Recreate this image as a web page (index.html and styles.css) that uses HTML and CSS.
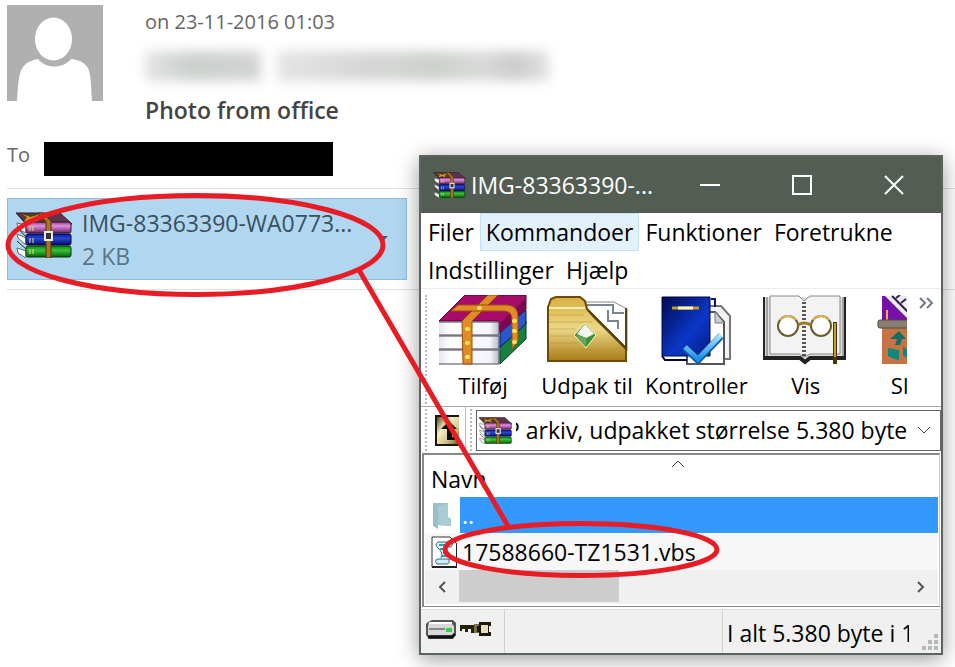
FILE: index.html
```html
<!DOCTYPE html>
<html lang="da">
<head>
<meta charset="utf-8">
<title>Photo from office</title>
<link rel="stylesheet" href="styles.css">
</head>
<body>
<svg class="defs" aria-hidden="true">
  <defs>
    <linearGradient id="pink" x1="0" y1="0" x2="0" y2="1"><stop offset="0" stop-color="#8d3b82"/><stop offset=".35" stop-color="#e08fdc"/><stop offset="1" stop-color="#6b2463"/></linearGradient>
    <linearGradient id="blue" x1="0" y1="0" x2="0" y2="1"><stop offset="0" stop-color="#0a1890"/><stop offset=".4" stop-color="#2748d8"/><stop offset="1" stop-color="#050a60"/></linearGradient>
    <linearGradient id="green" x1="0" y1="0" x2="0" y2="1"><stop offset="0" stop-color="#148a18"/><stop offset=".4" stop-color="#35c235"/><stop offset="1" stop-color="#0a5c0e"/></linearGradient>
    <linearGradient id="page" x1="0" y1="0" x2="1" y2="0"><stop offset="0" stop-color="#e4e8f0"/><stop offset=".2" stop-color="#fff"/><stop offset=".85" stop-color="#f4f5fa"/><stop offset="1" stop-color="#b6bac8"/></linearGradient>
    <linearGradient id="gold" x1="0" y1="0" x2="0" y2="1"><stop offset="0" stop-color="#d8b040"/><stop offset=".5" stop-color="#ecd888"/><stop offset="1" stop-color="#a87a14"/></linearGradient>
    <linearGradient id="cover" x1="0" y1="0" x2="1" y2="1"><stop offset="0" stop-color="#020a50"/><stop offset=".6" stop-color="#0b37c8"/><stop offset="1" stop-color="#041a80"/></linearGradient>
    <linearGradient id="tick" x1="0" y1="0" x2="0" y2="1"><stop offset="0" stop-color="#a8e4ff"/><stop offset="1" stop-color="#1b8fe0"/></linearGradient>
    <linearGradient id="brass" x1="0" y1="0" x2="1" y2="1"><stop offset="0" stop-color="#5a4a18"/><stop offset=".35" stop-color="#f4efc8"/><stop offset=".65" stop-color="#d8c88c"/><stop offset="1" stop-color="#6a5820"/></linearGradient>
    <symbol id="books" viewBox="0 0 56 46">
      <path d="M0 1H44L56 12H11Z" fill="#5c3450" stroke="#2a1a20"/>
      <path d="M3 2H24L34 11H16Z" fill="#5a3d14"/>
      <path d="M6 2l9 3 9-3-5 5 4 4-8-4-7 3 3-5Z" fill="#c79a2a"/>
      <path d="M1 11l9 2v8L2 17ZM1 22l9 4v7l-8-7ZM1 36l9 3v7l-8-5Z" fill="#fff" stroke="#666"/>
      <path d="M0 1l10 11M1 15l9 10M1 29l9 8" fill="none" stroke="#252525"/>
      <rect x="10" y="10" width="45" height="11" rx="2" fill="url(#pink)" stroke="#36152f"/>
      <rect x="10" y="22" width="45" height="11" rx="2" fill="url(#blue)" stroke="#040832"/>
      <rect x="10" y="34" width="45" height="11" rx="2" fill="url(#green)" stroke="#05340a"/>
      <path d="M14 14v5M17 14v5M14 26v5M17 26v5M14 37v5M17 37v5" stroke="#f0df78"/>
      <path d="M27 1l8 8v37h-5V10L22 1Z" fill="#a87424" stroke="#503208"/>
      <rect x="29" y="20" width="7" height="8" fill="#333" stroke="#e6e6e6" stroke-width="2"/>
    </symbol>
  </defs>
</svg>

<main class="mail">
  <header class="mail-head">
    <svg class="avatar" viewBox="0 0 96 96" role="img" aria-label="Sender">
      <rect width="96" height="96" fill="#b0b0b0"/>
      <ellipse cx="46.500" cy="34" rx="18.500" ry="21.500" fill="#fff"/>
      <path d="M10 96C11 78 12 67 16 62C20 57 25 55 31 54C39 64 56 64 64 54C73 55 78 58 81 63C84 69 84 80 85 96Z" fill="#fff"/>
    </svg>
    <div class="mail-meta">
      <p class="date">on 23-11-2016 01:03</p>
      <div class="sender"><i class="blot one"></i><i class="blot two"></i><i class="blot three"></i></div>
      <h1>Photo from office</h1>
    </div>
  </header>
  <div class="to"><span>To</span><div class="redacted"></div></div>
  <section class="attachments">
    <a class="attachment" href="#file">
      <svg class="file-icon"><use href="#books"/></svg>
      <span class="file-text"><span class="file-name">IMG-83363390-WA0773...</span><span class="file-size">2 KB</span></span>
      <span class="drop"></span>
    </a>
  </section>
</main>

<section class="window">
  <header class="titlebar">
    <svg class="title-icon"><use href="#books"/></svg>
    <h2>IMG-83363390-...</h2>
    <div class="win-buttons">
      <button aria-label="Minimer"><svg viewBox="0 0 20 20"><path d="M0 10H20" stroke-width="2"/></svg></button>
      <button aria-label="Maksimer"><svg viewBox="0 0 20 20"><path d="M1 1H19V19H1Z" stroke-width="2"/></svg></button>
      <button aria-label="Luk"><svg viewBox="0 0 20 20"><path d="M1 1L19 19M19 1L1 19" stroke-width="2"/></svg></button>
    </div>
  </header>
  <nav class="menu">
    <button>Filer</button><button class="hot">Kommandoer</button><button>Funktioner</button><button>Foretrukne</button><button>Indstillinger</button><button>Hjælp</button>
  </nav>
  <div class="toolbar">
    <span class="grip"></span>
    <div class="tools">
      <button>
        <svg viewBox="0 0 90 70">
          <path d="M62 50L88 26V44L62 69Z" fill="#168040" stroke="#053818"/>
          <path d="M62 36L88 15V29L62 52Z" fill="#2858d0" stroke="#061a58"/>
          <path d="M1 26L27 0H88V14L62 38L60 26Z" fill="#a80c68" stroke="#500530"/>
          <path d="M62 28L88 3V14L62 38Z" fill="#7c0850"/>
          <path d="M1 27H61V40H1ZM1 41H61V54H1ZM1 55H61V69H1Z" fill="url(#page)"/>
          <path d="M1 27H61V40H1M1 41H61V54H1M1 55H61V69H1" fill="none" stroke="#4a4658"/>
          <path d="M24 26L50 0H60L34 26V69H25Z" fill="#e08a28" stroke="#9a5208"/>
          <path d="M20 10H70Q80 11 80 22V46L74 54V25Q74 16 66 16H13Z" fill="#e08a28" stroke="#9a5208"/>
          <path d="M29 34h1M29 48h1M29 62h1M41 13h1M76 26h1M76 36h1M76 47h1" stroke="#ffe65a" stroke-width="4" stroke-linecap="round"/>
        </svg><span>Tilføj</span></button>
      <button>
        <svg viewBox="0 0 90 70">
          <path d="M41 7H72L85 14V56H41Z" fill="#fff" stroke="#888"/>
          <path d="M44 10H71V18H82M66 15V26H76V34" fill="none" stroke="#7c8494" stroke-width="2"/>
          <path d="M6 12L9 4L14 2H38L43 6L45 14L52 22L84 54V66H6Z" fill="url(#gold)" stroke="#6b4a08" stroke-width="2"/>
          <path d="M46 15L84 53V13" fill="none" stroke="#57420e" stroke-width="2"/>
          <path d="M7 13H43" stroke="#fff0b0" stroke-width="2"/>
          <path d="M8 20H42M8 27H50M8 34H34M8 41H32M8 48H36M8 55H80" stroke="#b98e28" opacity=".5"/>
          <path d="M43 28L54 40L44 53L32 40Z" fill="#3f9138" stroke="#fff5c0"/>
          <path d="M43 29L52 39L44 43L35 39Z" fill="#f3f5ee"/>
          <path d="M44 43V52L33 40Z" fill="#68a858"/>
        </svg><span>Udpak til</span></button>
      <button>
        <svg viewBox="0 0 90 70">
          <path d="M56 11H70L79 21V64H56Z" fill="#f3f3f3" stroke="#777" stroke-width="2"/>
          <path d="M54 17H64L73 27V69H36V54H54Z" fill="#fff" stroke="#555" stroke-width="2"/>
          <path d="M64 17V28H73" fill="#ccc" stroke="#777"/>
          <path d="M11 2H59V61H11Z" fill="url(#cover)" stroke="#020840"/>
          <path d="M60 4H64V12" fill="none" stroke="#051770" stroke-width="2"/>
          <path d="M11 61L14 65H36" fill="none" stroke="#04083a" stroke-width="2"/>
          <path d="M21 13H48" stroke="#bd9c34" stroke-width="3"/><path d="M27 13H42" stroke="#fff2b4" stroke-width="3"/>
          <path d="M34 53L47 65L70 41" fill="none" stroke="#0e5aa8" stroke-width="7"/>
          <path d="M34 52L47 64L70 40" fill="none" stroke="url(#tick)" stroke-width="5"/>
        </svg><span>Kontroller</span></button>
      <button>
        <svg viewBox="0 0 90 70">
          <path d="M3 2V64H39L44 67L49 64H84V2" fill="#ddd" stroke="#222" stroke-width="2"/>
          <path d="M9 1H38L43 6L49 1H79V59H49L43 62L38 59H9Z" fill="#f3f3f3" stroke="#888"/>
          <path d="M6 2V61M82 2V61" stroke="#666"/>
          <path d="M3 63H39L44 67L49 63H84" fill="none" stroke="#222" stroke-width="4"/>
          <path d="M43 7V62" stroke="#555" stroke-width="4" stroke-dasharray="2 2"/>
          <circle cx="27" cy="31" r="10" fill="#fff" stroke="#6b5a30" stroke-width="2"/><circle cx="60" cy="31" r="10" fill="#fff" stroke="#6b5a30" stroke-width="2"/>
          <path d="M19 25Q27 17 35 25M52 25Q60 17 68 25" fill="none" stroke="#d9b65a" stroke-width="2"/>
          <path d="M37 30Q43 26 50 30" fill="none" stroke="#9c7a28" stroke-width="3"/>
          <path d="M74 27V69" stroke="#4a3708" stroke-width="4"/><path d="M74 28V62" stroke="#c89a28" stroke-width="2"/>
        </svg><span>Vis</span></button>
      <button>
        <svg viewBox="0 0 90 70">
          <path d="M17 1H80V26H17Z" fill="#f1edf8"/>
          <path d="M17 1H20L43 24V28H17Z" fill="#7510a8"/>
          <path d="M27 1L46 20M31 3l4-3M36 8l5-4" fill="none" stroke="#33234a" stroke-width="2"/>
          <path d="M22 15V30" stroke="#efad3b" stroke-width="2"/>
          <rect x="17" y="32" width="62" height="37" fill="#c77445"/>
          <rect x="13" y="25" width="68" height="8" rx="2" fill="#887e70" stroke="#504a42"/>
          <path d="M25 44L34 36L41 44H37L35 50H30L32 44Z" fill="#156d66"/>
          <path d="M23 53L34 55V65L29 64L23 61ZM38 52L45 55V66L38 60Z" fill="#13877a"/>
        </svg><span>Slet</span></button>
    </div>
    <button class="more" aria-label="Flere"><svg viewBox="0 0 16 12"><path d="M2 1L7 6L2 11M9 1L14 6L9 11"/></svg></button>
  </div>
  <div class="address">
    <span class="grip"></span>
    <button class="up" aria-label="Op"><svg viewBox="0 0 24 31"><rect width="24" height="31" fill="#18150a"/><rect x="2" y="2" width="22" height="27" fill="url(#brass)"/><path d="M14 6L22 14H17V22H24V25H12V14H6Z" fill="#0d0c08"/></svg></button>
    <span class="rule"></span>
    <span class="grip"></span>
    <div class="combo">
      <svg class="combo-icon"><use href="#books"/></svg>
      <div class="combo-clip"><select aria-label="Arkiv"><option>P arkiv, udpakket størrelse 5.380 byte</option></select></div>
      <svg class="chev" viewBox="0 0 14 8"><path d="M1 1L7 7L13 1"/></svg>
    </div>
  </div>
  <div class="list">
    <table>
      <thead><tr><th colspan="2">Navn<svg class="sort" viewBox="0 0 14 8"><path d="M1 7L7 1L13 7"/></svg></th></tr></thead>
      <tbody>
        <tr class="selected"><td class="ico"><svg viewBox="0 0 26 30"><path d="M2 3H17V17L20 19V26L7 25V29L2 26Z" fill="#9bbfca"/><path d="M7 25V6L17 3V17L20 19V26Z" fill="#a9cbd4"/></svg></td><td class="name">..</td></tr>
        <tr><td class="ico"><svg viewBox="0 0 26 32"><path d="M1 1H19L26 8V31H1Z" fill="#fff" stroke="#333"/><path d="M26 8V31H1" fill="none" stroke="#222" stroke-width="2"/><path d="M7 6H19Q23 8 20 11H16Q14 13 19 18Q22 22 18 24M7 6Q3 9 7 12Q13 17 10 22M6 23H17Q20 27 16 28H6Q3 25 6 23" fill="#d3eef5" stroke="#2c6d86"/><path d="M8 9H18M9 13H15M12 17H17M11 20H18" stroke="#2f9ab8" stroke-width="2"/></svg></td><td class="name">17588660-TZ1531.vbs</td></tr>
      </tbody>
    </table>
    <div class="scroll">
      <button aria-label="Venstre"><svg viewBox="0 0 10 12"><path d="M8 1L3 6L8 11"/></svg></button>
      <div class="track"><div class="thumb"></div></div>
      <button aria-label="Højre"><svg viewBox="0 0 10 12"><path d="M2 1L7 6L2 11"/></svg></button>
    </div>
  </div>
  <footer class="status">
    <div class="status-icons">
      <svg class="drive" viewBox="0 0 32 20"><path d="M3 2L7 0H28L31 3V14L28 19H4L1 15V4Z" fill="#555"/><path d="M4 3H26L29 6V15H3V6Z" fill="#d8d8d8"/><path d="M4 3H27" stroke="#fff" stroke-width="2"/><path d="M3 17H27L30 14" stroke="#111" stroke-width="3" fill="none"/><path d="M4 9H20" stroke="#888" stroke-width="2"/><rect x="21" y="8" width="6" height="4" fill="#38d048"/></svg>
      <svg class="key" viewBox="0 0 34 18"><path d="M1 5H17V9H15V13H12V9H9V12H6V9H3V11H1Z" fill="#29200c"/><rect x="15" y="4" width="6" height="9" fill="#7d6b43"/><path d="M20 2H32V6H30V12H32V16H20V12H18V6H20Z" fill="#1d170a"/><rect x="22" y="5" width="7" height="8" fill="#e9dcb8"/></svg>
    </div>
    <div class="status-mid"></div>
    <div class="status-total"><span>I alt 5.380 byte i 1</span></div>
    <svg class="resize" viewBox="0 0 16 16"><path d="M12 0h4v4h-4zM6 6h4v4h-4zM12 6h4v4h-4zM0 12h4v4h-4zM6 12h4v4h-4zM12 12h4v4h-4z" fill="#b8b8b8"/></svg>
  </footer>
</section>

<svg class="markup" viewBox="0 0 955 667" aria-hidden="true">
  <ellipse cx="195.500" cy="245" rx="187.500" ry="49.500" stroke-width="5"/>
  <path d="M359 270L508 526" stroke-width="5"/>
  <ellipse cx="581" cy="549.500" rx="136" ry="26" stroke-width="5"/>
</svg>
</body>
</html>
```
FILE: styles.css
```css
* { box-sizing: border-box; }
body {
  margin: 0;
  min-height: 100vh;
  background: #fff;
  color: #000;
  font: 23px/30px "Open Sans", "Noto Sans", sans-serif;
  overflow: hidden;
}
h1, h2, p { margin: 0; font-size: inherit; font-weight: 400; }
button, select {
  border: 0;
  padding: 0;
  background: none;
  color: inherit;
  font: inherit;
}
svg { display: block; flex: none; }
.defs { position: absolute; width: 0; height: 0; }

.mail { padding: 5px 0 0 7px; }
.mail-head { display: flex; gap: 42px; }
.avatar { width: 96px; height: 96px; }
.mail-meta { flex: 1; }
.date { font-size: 20px; line-height: 34px; color: #666; }
.sender {
  display: flex;
  align-items: center;
  height: 53px;
  filter: blur(6px);
}
.blot { height: 30px; background: #dcdedc; }
.one { width: 116px; background: linear-gradient(90deg, #e2e4e2, #ccd0cd 40%, #d2d4d2); }
.two { width: 104px; margin-left: 16px; background: linear-gradient(90deg, #e4e4e4, #d2d4d2); }
.three { width: 168px; background: linear-gradient(90deg, #d6d8d6, #cdd0cd 30%, #d8dad8 60%, #ccc 80%, #e2e2e2); }
h1 { line-height: 36px; font-weight: 600; color: #444; }
.to {
  display: flex;
  gap: 16px;
  padding: 8px 0 12px;
  height: 60px;
  color: #666;
  font-size: 20px;
  line-height: 26px;
}
.redacted { width: 289px; height: 34px; margin-top: 6px; background: #000; }
.to span { width: 21px; margin-top: 6px; }
.attachments {
  padding: 9px 0;
  border-top: 1px solid #e0e0e0;
  border-bottom: 1px solid #e0e0e0;
}
.attachment {
  display: flex;
  align-items: flex-start;
  gap: 10px;
  width: 400px;
  height: 82px;
  padding: 9px 8px;
  border: 1px solid #92bcda;
  background: #b1d6f0;
  color: #38505f;
  text-decoration: none;
}
.file-icon { width: 56px; height: 46px; margin-top: 4px; }
.file-text { display: flex; flex-direction: column; gap: 3px; flex: 1; white-space: nowrap; }
.file-size { color: #5c7586; }
.drop { width: 8px; border: 4px solid transparent; border-top-color: #456; margin: 28px 10px 0 0; }

.window {
  position: absolute;
  left: 419px;
  top: 155px;
  width: 524px;
  border: 2px solid #5b645d;
  background: #fff;
  box-shadow: 0 4px 20px rgba(0, 0, 0, .4);
}
.titlebar {
  display: flex;
  align-items: center;
  height: 56px;
  padding: 0 1px 0 12px;
  gap: 5px;
  background: #545d54;
  color: #fff;
}
.title-icon { width: 33px; height: 26px; }
.titlebar h2 { flex: 1; white-space: nowrap; }
.win-buttons { display: flex; }
.win-buttons button { display: grid; place-items: center; width: 92px; height: 54px; }
.win-buttons svg { width: 20px; height: 20px; fill: none; stroke: #fff; }

.menu { display: flex; flex-wrap: wrap; height: 76px; padding-left: 1px; border-bottom: 1px solid #ececec; }
.menu button { height: 38px; padding: 0 5px; border: 1px solid transparent; }
.menu .hot { background: #e3f1fd; border-color: #c5e0f5; }

.toolbar { display: flex; padding: 4px 0 0 4px; height: 118px; border-bottom: 1px solid #aaa; }
.grip { width: 2px; margin: 2px 4px 2px 0; border-left: 2px dotted #bbb; }
.tools { display: flex; flex: 1; overflow: hidden; font-size: 22px; }
.tools button { display: flex; flex: none; flex-direction: column; align-items: center; min-width: 104px; padding: 0 6px; }
.tools svg { width: 90px; height: 70px; margin: 2px -6px 5px; }
.more { display: flex; width: 34px; padding: 4px 0 0 11px; }
.more svg { width: 16px; height: 12px; fill: none; stroke: #747a88; stroke-width: 2; }

.address { display: flex; align-items: center; gap: 4px; height: 46px; padding-left: 4px; }
.address .grip { align-self: stretch; }
.up { margin-right: 2px; }
.up svg { width: 24px; height: 31px; }
.rule { width: 1px; align-self: stretch; background: #bbb; }
.address .rule + .grip { margin-right: 0; }
.combo {
  display: flex;
  align-items: center;
  flex: 1;
  height: 41px;
  padding: 0 9px 0 2px;
  border: 1px solid #666;
  min-width: 0;
}
.combo-icon { width: 33px; height: 27px; margin-right: 4px; }
.combo-clip { flex: 1; overflow: hidden; }
.combo select { display: block; appearance: none; margin-left: -10px; height: 36px; outline: 0; }
.chev, .sort { width: 14px; height: 8px; fill: none; stroke: #444; }

.list { margin: 0 1px 2px 1px; padding: 1px 1px 2px; border: 2px solid #888; border-right: 1px solid #ccc; border-bottom-width: 1px; }
table { width: 100%; border-collapse: collapse; }
th { position: relative; height: 41px; padding: 4px 6px 0; text-align: left; font-weight: 400; }
.sort { position: absolute; left: 48%; top: 4px; }
td { height: 37px; padding: 0; background: #f7f7f7; }
.ico { width: 35px; padding-left: 6px; }
.ico svg { width: 26px; height: 32px; }
.selected td { height: 36px; }
.selected .ico { background: #fff; }
.selected .name { background: #3399ff; color: #fff; }
.name { padding-left: 2px; }
.scroll { display: flex; height: 34px; background: #f0f0f0; }
.scroll button { display: grid; place-items: center; width: 34px; }
.scroll svg { width: 10px; height: 12px; fill: none; stroke: #555; stroke-width: 2; }
.track { flex: 1; }
.thumb { width: 36%; height: 32px; background: #cdcdcd; }

.status { display: flex; height: 44px; background: #f0f0f0; border-top: 1px solid #ddd; }
.status-icons { display: flex; align-items: flex-start; gap: 2px; width: 84px; padding: 10px 4px; border-right: 1px solid #d0d0d0; }
.drive { width: 32px; height: 20px; }
.key { width: 34px; height: 18px; }
.status-mid { flex: 1; border-right: 1px solid #d0d0d0; }
.status-total { width: 186px; padding: 8px 0 0 4px; overflow: hidden; white-space: nowrap; }
.resize { width: 16px; height: 16px; margin: 24px 3px 0 13px; }

.markup { position: absolute; left: 0; top: 0; width: 955px; height: 667px; fill: none; stroke: #e81c24; pointer-events: none; }
```
